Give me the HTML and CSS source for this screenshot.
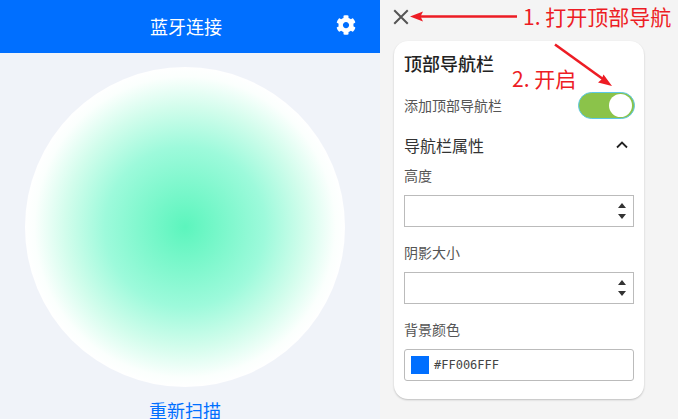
FILE: index.html
```html
<!DOCTYPE html>
<html lang="zh">
<head>
<meta charset="utf-8">
<title>蓝牙连接</title>
<link rel="stylesheet" href="styles.css">
</head>
<body>
<main class="phone">
  <header class="topbar">
    <span class="topbar-title">蓝牙连接</span>
    <svg class="gear" viewBox="0 0 512 512"><path fill="#fff" d="M487.4 315.700l-42.600-24.600c4.300-23.200 4.300-47 0-70.200l42.600-24.600c4.900-2.800 7.100-8.600 5.500-14-11.100-35.600-30-67.800-54.700-94.600-3.800-4.100-10-5.100-14.800-2.300L380.800 110c-17.900-15.400-38.500-27.300-60.800-35.100V25.800c0-5.600-3.900-10.500-9.400-11.700-36.700-8.200-74.300-7.800-109.200 0-5.500 1.200-9.400 6.100-9.400 11.700V75c-22.200 7.900-42.800 19.800-60.800 35.100L88.700 85.500c-4.900-2.800-11-1.900-14.800 2.300-24.700 26.700-43.600 58.900-54.700 94.600-1.700 5.400.6 11.200 5.500 14L67.300 221c-4.300 23.200-4.300 47 0 70.200l-42.600 24.600c-4.900 2.800-7.100 8.600-5.500 14 11.100 35.600 30 67.800 54.700 94.600 3.800 4.100 10 5.100 14.800 2.300l42.600-24.600c17.900 15.400 38.500 27.300 60.800 35.100v49.200c0 5.600 3.900 10.500 9.400 11.700 36.700 8.200 74.300 7.800 109.200 0 5.500-1.200 9.400-6.100 9.400-11.700v-49.200c22.200-7.900 42.800-19.800 60.800-35.100l42.600 24.600c4.900 2.800 11 1.900 14.800-2.300 24.700-26.700 43.600-58.900 54.700-94.600 1.500-5.500-.7-11.300-5.600-14.100zM256 336c-44.100 0-80-35.900-80-80s35.900-80 80-80 80 35.900 80 80-35.900 80-80 80z"/></svg>
  </header>
  <section class="scan">
    <div class="radar"></div>
    <a class="rescan">重新扫描</a>
  </section>
</main>

<aside class="settings">
  <svg class="close" viewBox="0 0 16 16"><path d="M2 2l12 12M14 2L2 14" fill="none" stroke="#555" stroke-width="1.800"/></svg>
  <div class="card">
    <h2 class="card-title">顶部导航栏</h2>
    <div class="row">
      <span class="row-label">添加顶部导航栏</span>
      <span class="toggle"><span class="knob"></span></span>
    </div>
    <div class="group-head">
      <span>导航栏属性</span>
      <svg class="chevron" viewBox="0 0 12 8"><path d="M1 6.500l5-5 5 5" fill="none" stroke="#222" stroke-width="1.800"/></svg>
    </div>
    <label class="field-label">高度</label>
    <div class="input">
      <svg class="spin" viewBox="0 0 8 16"><path d="M4 0l4 5H0zM4 16L0 11h8z" fill="#333"/></svg>
    </div>
    <label class="field-label spaced">阴影大小</label>
    <div class="input">
      <svg class="spin" viewBox="0 0 8 16"><path d="M4 0l4 5H0zM4 16L0 11h8z" fill="#333"/></svg>
    </div>
    <label class="field-label spaced">背景颜色</label>
    <div class="input color-input">
      <span class="swatch"></span>
      <span class="hex">#FF006FFF</span>
    </div>
  </div>
</aside>

<div class="note note-one">1. 打开顶部导航</div>
<div class="note note-two">2. 开启</div>
<svg class="arrows" viewBox="0 0 678 419">
  <path d="M517 16.500H420" stroke="#ed1c24" stroke-width="2.600" fill="none"/>
  <path d="M410 16.500l13-5-2.500 5 2.500 5z" fill="#ed1c24"/>
  <path d="M555 44.500l50 36" stroke="#ed1c24" stroke-width="2.600" fill="none"/>
  <path d="M612 86l-14-3.500 3.500-3 2-5z" fill="#ed1c24"/>
</svg>
</body>
</html>
```
FILE: styles.css
```css
* { box-sizing: border-box; }
html, body { margin: 0; height: 100%; }
body {
  display: flex;
  width: 678px;
  height: 419px;
  overflow: hidden;
  position: relative;
  background: #f4f4f4;
  font-family: "Noto Sans CJK SC", "Noto Sans", sans-serif;
  color: #333;
}
.phone { width: 380px; flex: none; background: #f0f3f9; }
.topbar {
  height: 53px;
  background: #006fff;
  display: flex;
  align-items: center;
  justify-content: center;
  position: relative;
}
.topbar-title { color: #fff; font-size: 18px; margin-right: 8px; line-height: 53px; }
.gear { position: absolute; left: 336px; top: 15px; width: 20px; height: 20px; }
.scan { display: flex; flex-direction: column; align-items: center; padding: 14px 10px 0 0; }
.radar {
  width: 320px;
  height: 320px;
  border-radius: 50%;
  background: radial-gradient(circle closest-side, #5cf5bd 0%, #9dfadb 50%, #d2fdec 75%, #fbfffd 94%, #fff 100%);
}
.rescan { margin-top: 10px; font-size: 18px; line-height: 26px; color: #006fff; }
.settings { flex: 1; padding: 8px 34px 0 14px; }
.close { display: block; width: 18px; height: 18px; margin-left: -2px; }
.card {
  margin-top: 15px;
  width: 250px;
  height: 358px;
  background: #fff;
  border-radius: 14px;
  box-shadow: 0 1px 2px rgba(0,0,0,.22);
  padding: 10px 10px 0;
}
.card-title { margin: 0; font-size: 18px; font-weight: 500; line-height: 24px; color: #222; }
.row { display: flex; align-items: center; justify-content: space-between; margin-top: 17px; height: 27px; margin-right: -1px; }
.row-label { font-size: 14px; color: #555; padding-bottom: 2px; }
.toggle {
  width: 57px;
  height: 27px;
  border-radius: 14px;
  background: #8bc34a;
  border: 1px solid #5bc8e8;
  padding: 1px 2px;
  display: flex;
  justify-content: flex-end;
}
.knob { width: 23px; height: 23px; border-radius: 50%; background: #fff; }
.group-head { display: flex; justify-content: space-between; align-items: center; font-size: 16px; margin-top: 14px; height: 24px; color: #333; }
.chevron { width: 12px; height: 8px; margin-right: 6px; }
.field-label { display: block; font-size: 14px; line-height: 20px; color: #555; margin-top: 8px; }
.spaced { margin-top: 15px; }
.input {
  margin-top: 10px;
  height: 32px;
  width: 230px;
  border: 1px solid #bbb;
  background: #fff;
  display: flex;
  align-items: center;
  justify-content: flex-end;
  padding-right: 7px;
}
.spin { width: 8px; height: 16px; }
.color-input { justify-content: flex-start; border-radius: 3px; padding: 0 0 0 6px; gap: 5px; }
.swatch { width: 18px; height: 18px; background: #006fff; }
.hex { font-family: "DejaVu Sans Mono", monospace; font-size: 12px; color: #444; }
.note { position: absolute; color: #ed1c24; font-size: 21px; line-height: 28px; white-space: nowrap; }
.note-one { left: 523px; top: 2px; }
.note-two { left: 512px; top: 64px; }
.arrows { position: absolute; left: 0; top: 0; width: 678px; height: 419px; pointer-events: none; }
```
